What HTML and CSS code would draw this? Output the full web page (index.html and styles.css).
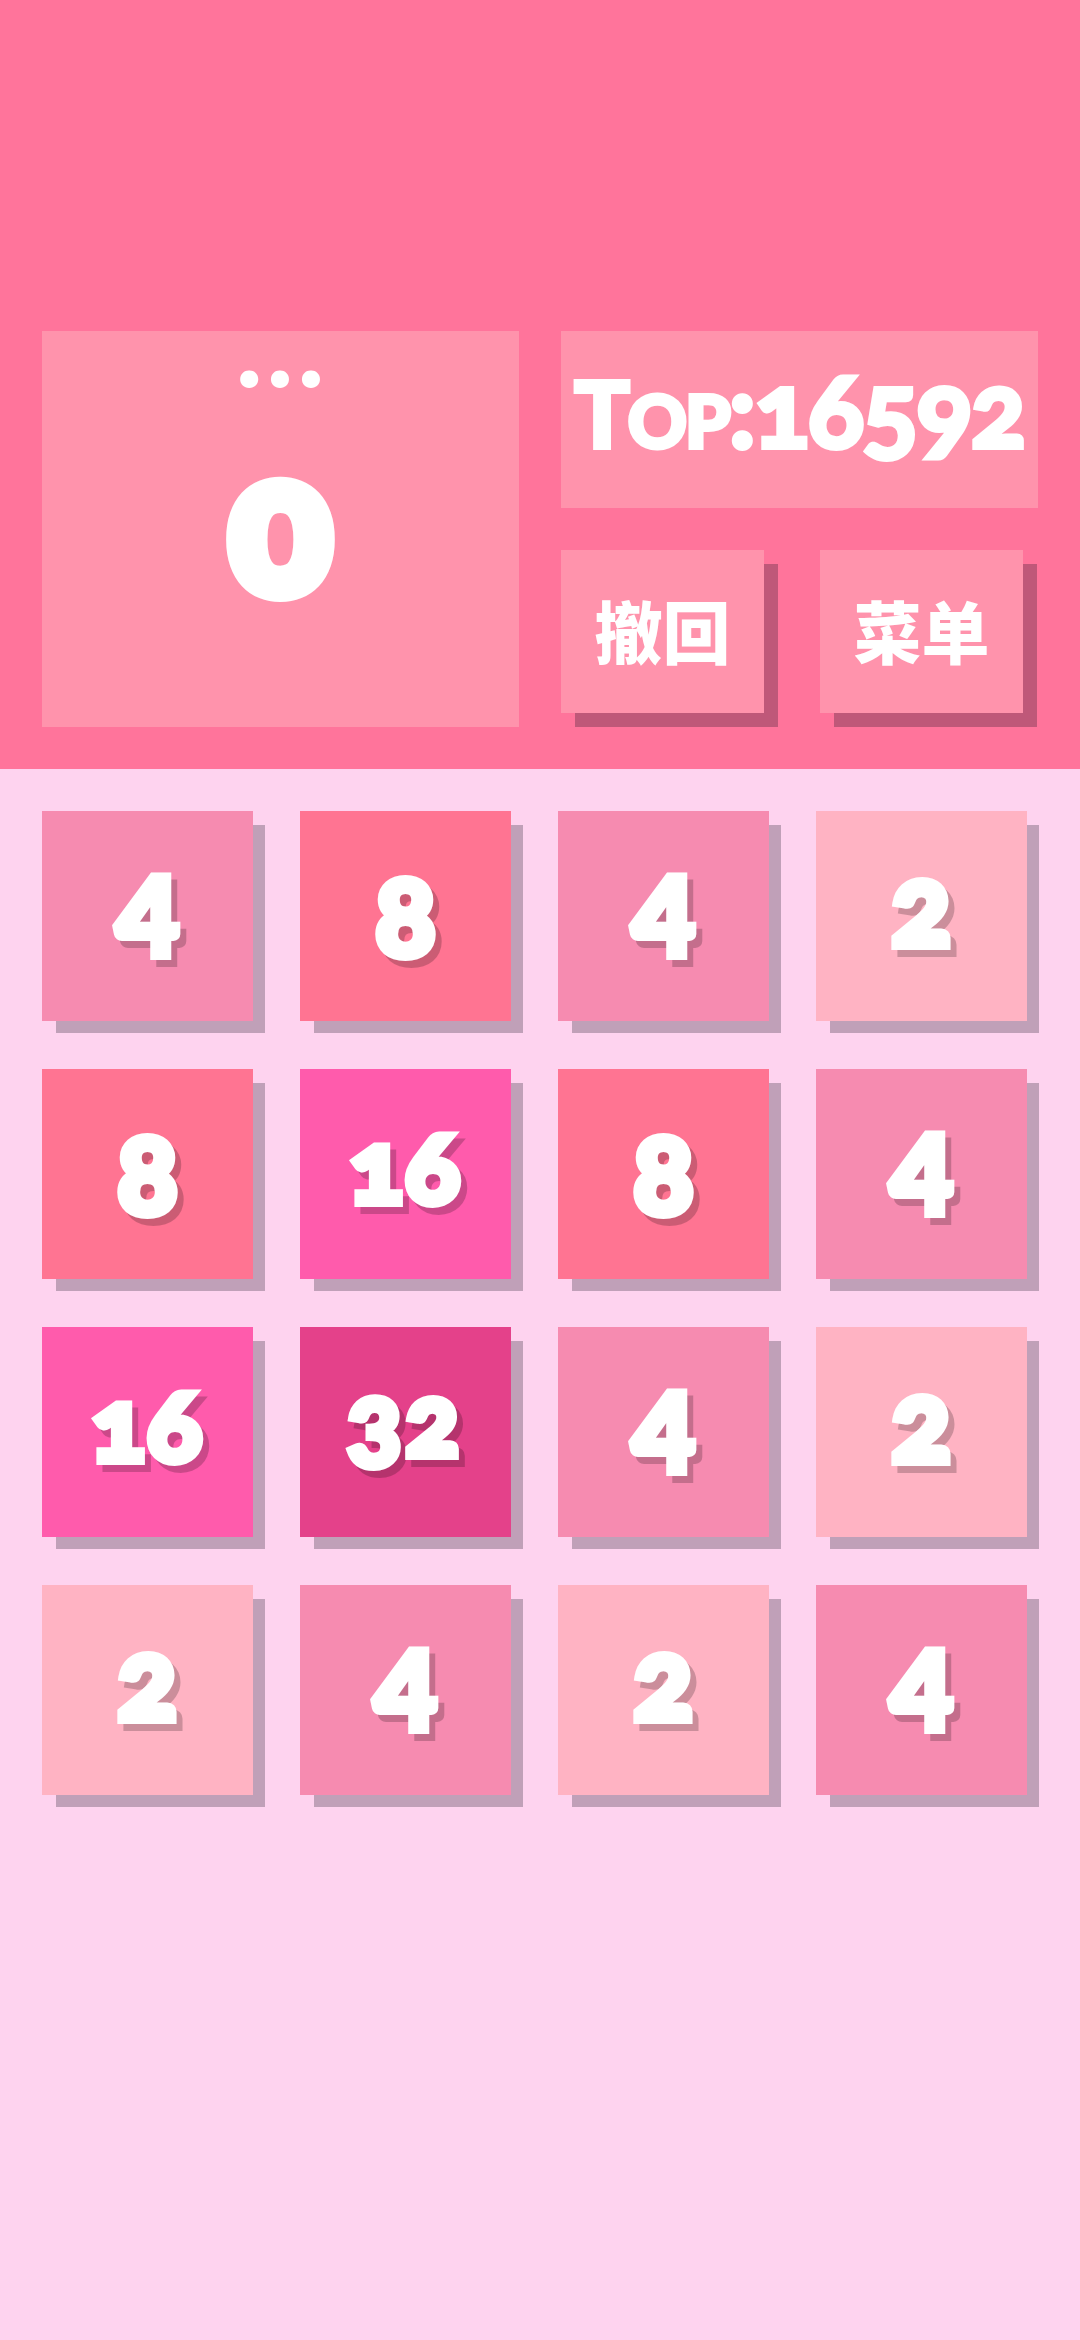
FILE: index.html
```html
<!DOCTYPE html>
<html lang="zh-CN">
<head>
    <meta charset="UTF-8">
    <meta name="viewport" content="width=device-width, initial-scale=1.0">
    <title>2048</title>
    <link rel="stylesheet" href="styles.css">
</head>
<body>

    <div class="topo">
        <div class="score-box">
            <div class="dots">...</div>
            <div class="score">0</div>
        </div>
        <div class="side">
            <div class="best"><span><span class="cap">T</span>op:16592</span></div>
            <div class="buttons">
                <button class="btn" type="button">撤回</button>
                <button class="btn" type="button">菜单</button>
            </div>
        </div>
    </div>

    <div class="board">
        <div class="tile t4"><span class="num" data-num="4">4</span></div>
        <div class="tile t8"><span class="num" data-num="8">8</span></div>
        <div class="tile t4"><span class="num" data-num="4">4</span></div>
        <div class="tile t2"><span class="num" data-num="2">2</span></div>

        <div class="tile t8"><span class="num" data-num="8">8</span></div>
        <div class="tile t16"><span class="num" data-num="16">16</span></div>
        <div class="tile t8"><span class="num" data-num="8">8</span></div>
        <div class="tile t4"><span class="num" data-num="4">4</span></div>

        <div class="tile t16"><span class="num" data-num="16">16</span></div>
        <div class="tile t32"><span class="num" data-num="32">32</span></div>
        <div class="tile t4"><span class="num" data-num="4">4</span></div>
        <div class="tile t2"><span class="num" data-num="2">2</span></div>

        <div class="tile t2"><span class="num" data-num="2">2</span></div>
        <div class="tile t4"><span class="num" data-num="4">4</span></div>
        <div class="tile t2"><span class="num" data-num="2">2</span></div>
        <div class="tile t4"><span class="num" data-num="4">4</span></div>
    </div>

</body>
</html>
```

FILE: styles.css
```css
body {
    margin: 0;
    height: 2340px;
    background: #fed3ef;
    font-family: "Lato", "Noto Sans CJK SC", sans-serif;
    font-weight: 900;
    font-variant-numeric: oldstyle-nums;
    color: #fff;
    overflow: hidden;
}

.topo {
    box-sizing: border-box;
    height: 769px;
    padding: 331px 42px 42px;
    background: #ff749b;
    display: flex;
    gap: 42px;
}

.score-box {
    width: 477px;
    background: #ff93ac;
    display: flex;
    flex-direction: column;
    align-items: center;
}

.dots {
    height: 70px;
    padding-left: 8px;
    font-size: 92px;
    line-height: 40px;
    letter-spacing: 9px;
    -webkit-text-stroke: 3px #fff;
}

.score {
    margin-top: -5px;
    font-size: 186px;
    line-height: 250px;
    -webkit-text-stroke: 16px #fff;
}

.side {
    width: 477px;
    display: flex;
    flex-direction: column;
    gap: 42px;
}

.best {
    box-sizing: border-box;
    height: 177px;
    padding-bottom: 24px;
    background: #ff93ac;
    display: flex;
    align-items: center;
    justify-content: center;
    font-size: 104px;
    font-variant-caps: small-caps;
    letter-spacing: -2px;
    -webkit-text-stroke: 4px #fff;
}

.cap {
    font-size: 92px;
}

.buttons {
    display: flex;
    gap: 56px;
}

.btn {
    width: 203px;
    height: 163px;
    padding: 0 0 4px;
    border: none;
    background: #ff93ac;
    color: #fff;
    font-family: "Noto Sans CJK SC", sans-serif;
    font-size: 68px;
    font-weight: 900;
    box-shadow: 14px 14px 0 #bf5879;
}

.board {
    padding: 42px;
    display: grid;
    grid-template-columns: repeat(4, 211px);
    grid-auto-rows: 210px;
    column-gap: 47px;
    row-gap: 48px;
}

.tile {
    box-sizing: border-box;
    display: flex;
    align-items: center;
    justify-content: center;
    isolation: isolate;
    font-size: 112px;
    box-shadow: 13px 13px 0 -1px #c0a0b8;
}

.num {
    position: relative;
    -webkit-text-stroke: 8px #fff;
}

/* text-shadow skips the stroke, so the drop shadow is a copy of the number */
.num::before {
    content: attr(data-num);
    position: absolute;
    left: 6px;
    top: 7px;
    z-index: -1;
    color: #000;
    -webkit-text-stroke: 8px #000;
    opacity: 0.2;
}

.t2 { background: #ffb3c3; padding-bottom: 27px; }
.t4 { background: #f68bb0; padding-bottom: 4px; font-size: 108px; font-variant-numeric: lining-nums; }
.t8 { background: #ff7492; padding-bottom: 8px; }
.t16 { background: #ff5bac; font-size: 100px; letter-spacing: 2px; padding-bottom: 20px; }
.t32 { background: #e4418a; font-size: 100px; letter-spacing: 4px; padding-bottom: 30px; }
```
